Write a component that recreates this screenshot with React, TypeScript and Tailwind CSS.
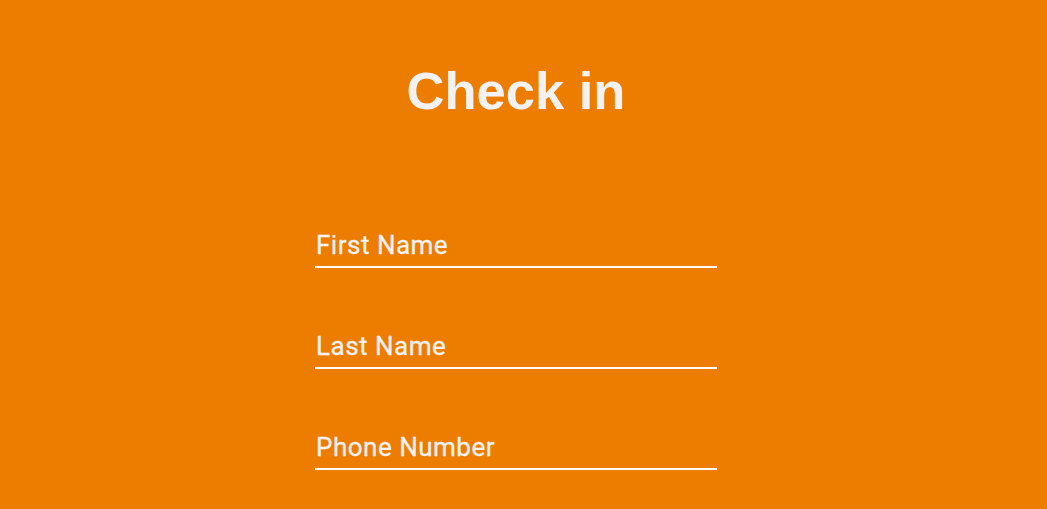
export default function App() {
  const fields = ["First Name", "Last Name", "Phone Number"];
  return (
    <div className="min-h-[509px] w-full bg-[#ed7d00]">
      <div className="w-[1032px] flex flex-col items-center">
        <h1
          className="mt-[61px] text-[52.5px] leading-[60px] font-bold text-[#f2f2f2]"
          style={{ fontFamily: '"Liberation Sans", Arial, sans-serif' }}
        >
          Check in
        </h1>
        <div className="mt-[109px] w-[402px] flex flex-col gap-[63px]">
          {fields.map((f) => (
            <div key={f} className="border-b-2 border-white pb-[6px]">
              <div
                className="pl-[1px] text-[26px] leading-[30px] tracking-[0.5px] text-[#f4f2f4]"
                style={{ fontFamily: 'Roboto, "Noto Sans", sans-serif', WebkitTextStroke: '0.3px #f4f2f4' }}
              >
                {f}
              </div>
            </div>
          ))}
        </div>
      </div>
    </div>
  );
}
